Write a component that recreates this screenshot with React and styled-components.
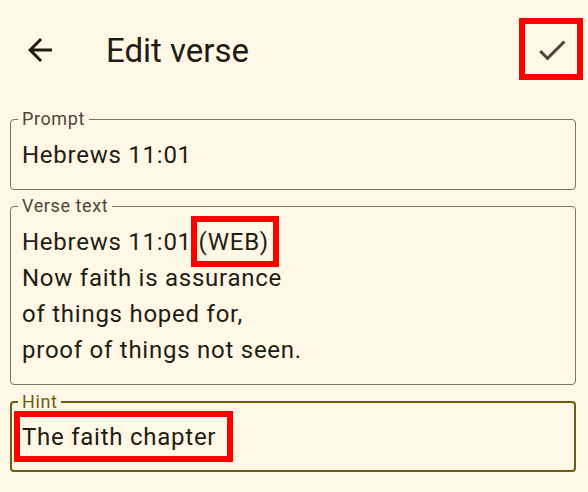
import React from "react";
import styled, { createGlobalStyle } from "styled-components";

const Global = createGlobalStyle`
  html, body { margin: 0; padding: 0; background: #fff8e6; }
  body { font-family: Roboto, "Noto Sans", "Liberation Sans", sans-serif; color: #1f1c13; }
`;

const Screen = styled.div`
  position: relative;
  width: 588px;
  height: 492px;
  overflow: hidden;
  background: #fff8e6;
`;

const TopBar = styled.header`
  display: flex;
  align-items: center;
  height: 100px;
  padding: 0 18px 0 22px;
  box-sizing: border-box;
`;

const IconButton = styled.button`
  display: flex;
  align-items: center;
  justify-content: center;
  width: 36px;
  height: 36px;
  padding: 0;
  border: none;
  background: none;
  color: ${(p) => p.$color || "#1f1c13"};
  cursor: pointer;
  svg { width: 36px; height: 36px; display: block; }
`;

const Title = styled.h1`
  flex: 1;
  margin: 0 0 0 48px;
  font-size: 33px;
  font-weight: 400;
  line-height: normal;
  color: #1f1c13;
`;

const Form = styled.div`
  display: flex;
  flex-direction: column;
  gap: 16px;
  padding: 19px 12px 0 10px;
`;

const Field = styled.div`
  position: relative;
  border: ${(p) => (p.$focused ? "2px solid #6c5e0f" : "1px solid #7a7362")};
  border-radius: 4px;
  padding: ${(p) => (p.$focused ? "15.5px 10px 15.5px 10px" : "16.5px 10px 16.5px 11px")};
`;

const Label = styled.span`
  position: absolute;
  top: -11px;
  left: ${(p) => (p.$focused ? "6px" : "7px")};
  padding: 0 4px;
  background: #fff8e6;
  font-size: 18px;
  line-height: 20px;
  letter-spacing: 0.6px;
  color: ${(p) => (p.$focused ? "#6c5e0f" : "#4b4639")};
`;

const Value = styled.div`
  font-size: 24px;
  line-height: 36px;
  letter-spacing: 0.75px;
  color: #1f1c13;
  white-space: pre-line;
`;

const Annotation = styled.div`
  position: absolute;
  box-sizing: border-box;
  border: 6px solid #ff0000;
  pointer-events: none;
`;

const ArrowBack = () => (
  <svg viewBox="0 0 24 24" fill="currentColor">
    <path d="M20 11H7.83l5.59-5.59L12 4l-8 8 8 8 1.41-1.41L7.83 13H20v-2z" />
  </svg>
);

const Check = () => (
  <svg viewBox="0 0 24 24" fill="currentColor">
    <path d="M9 16.17L4.83 12l-1.42 1.41L9 19 21 7l-1.41-1.41z" />
  </svg>
);

const fields = [
  { label: "Prompt", value: "Hebrews 11:01" },
  {
    label: "Verse text",
    value:
      "Hebrews 11:01 (WEB)\nNow faith is assurance\nof things hoped for,\nproof of things not seen.",
  },
  { label: "Hint", value: "The faith chapter", focused: true },
];

const annotations = [
  { x: 519, y: 18, w: 64, h: 62 },
  { x: 191, y: 216, w: 88, h: 51 },
  { x: 14, y: 411, w: 219, h: 51 },
];

export default function App() {
  return (
    <Screen>
      <Global />
      <TopBar>
        <IconButton aria-label="Back">
          <ArrowBack />
        </IconButton>
        <Title>Edit verse</Title>
        <IconButton aria-label="Save" $color="#4b4639">
          <Check />
        </IconButton>
      </TopBar>
      <Form>
        {fields.map((f) => (
          <Field key={f.label} $focused={f.focused}>
            <Label $focused={f.focused}>{f.label}</Label>
            <Value>{f.value}</Value>
          </Field>
        ))}
      </Form>
      {annotations.map((a, i) => (
        <Annotation
          key={i}
          style={{ left: a.x, top: a.y, width: a.w, height: a.h }}
        />
      ))}
    </Screen>
  );
}
